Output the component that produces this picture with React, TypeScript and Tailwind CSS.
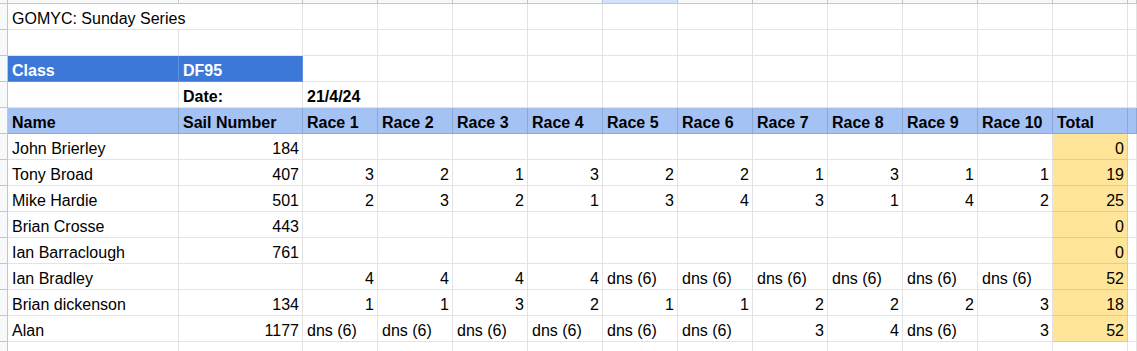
import type { ReactNode } from "react";

type Val = number | string;

interface Sailor {
    name: string;
    sail: Val;
    races: Val[];
    total: number;
}

const dns = "dns (6)";

const sailors: Sailor[] = [
    { name: "John Brierley", sail: 184, races: [], total: 0 },
    { name: "Tony Broad", sail: 407, races: [3, 2, 1, 3, 2, 2, 1, 3, 1, 1], total: 19 },
    { name: "Mike Hardie", sail: 501, races: [2, 3, 2, 1, 3, 4, 3, 1, 4, 2], total: 25 },
    { name: "Brian Crosse", sail: 443, races: [], total: 0 },
    { name: "Ian Barraclough", sail: 761, races: [], total: 0 },
    { name: "Ian Bradley", sail: "", races: [4, 4, 4, 4, dns, dns, dns, dns, dns, dns], total: 52 },
    { name: "Brian dickenson", sail: 134, races: [1, 1, 3, 2, 1, 1, 2, 2, 2, 3], total: 18 },
    { name: "Alan", sail: 1177, races: [dns, dns, dns, dns, dns, dns, 3, 4, dns, 3], total: 52 },
];

const races = Array.from({ length: 10 }, (_, i) => i);

function Cell({ children, right, className = "" }: { children?: ReactNode; right?: boolean; className?: string }) {
    return (
        <div
            className={`h-[26px] border-r border-b flex items-end pb-[1px] pl-[4px] pr-[3px] leading-[18px] whitespace-nowrap ${
                right ? "justify-end" : "justify-start"
            } ${className || "border-black/[0.11]"}`}
        >
            {children}
        </div>
    );
}

// row header on the far left
function RowHead() {
    return <div className="h-[26px] bg-[#f8f9fa] border-r border-b border-[#c4c7c5]" />;
}

function Blank({ n }: { n: number }) {
    return (
        <>
            {Array.from({ length: n }, (_, i) => (
                <Cell key={i} />
            ))}
        </>
    );
}

export default function App() {
    return (
        <div
            className="h-[351px] w-[1137px] overflow-hidden bg-white text-black text-[16px]"
            style={{ fontFamily: '"Liberation Sans", Arial, sans-serif' }}
        >
            <div className="grid grid-cols-[8px_171px_124px_repeat(11,75px)_1fr]">
                {/* column header strip */}
                <div className="h-[4px] bg-[#f8f9fa] border-r border-b border-[#c4c7c5]" />
                {Array.from({ length: 14 }, (_, i) => (
                    <div
                        key={i}
                        className={`h-[4px] border-r border-b border-[#c4c7c5] ${i === 6 ? "bg-[#d3e3fd]" : "bg-[#f8f9fa]"}`}
                    />
                ))}

                {/* title */}
                <RowHead />
                <div className="col-span-2 h-[26px] border-r border-b border-black/[0.11] flex items-end pb-[1px] pl-[4px] leading-[18px] whitespace-nowrap">
                    GOMYC: Sunday Series
                </div>
                <Blank n={12} />

                {/* blank */}
                <RowHead />
                <Blank n={14} />

                {/* class */}
                <RowHead />
                <Cell className="bg-[#3c78d8] text-white font-bold border-white/[0.18]">Class</Cell>
                <Cell className="bg-[#3c78d8] text-white font-bold border-white/[0.18]">DF95</Cell>
                <Blank n={12} />

                {/* date */}
                <RowHead />
                <Cell />
                <Cell className="font-bold border-black/[0.11]">Date:</Cell>
                <Cell className="font-bold border-black/[0.11]">21/4/24</Cell>
                <Blank n={11} />

                {/* header */}
                <RowHead />
                {["Name", "Sail Number", ...races.map((r) => `Race ${r + 1}`), "Total", ""].map((h, i) => (
                    <Cell key={i} className="bg-[#a4c2f4] font-bold border-black/[0.13]">
                        {h}
                    </Cell>
                ))}

                {sailors.map((s) => (
                    <div key={s.name} className="contents">
                        <RowHead />
                        <Cell>{s.name}</Cell>
                        <Cell right>{s.sail}</Cell>
                        {races.map((r) => {
                            const v = s.races[r];
                            return (
                                <Cell key={r} right={typeof v === "number"}>
                                    {v}
                                </Cell>
                            );
                        })}
                        <Cell right className="bg-[#ffe599] border-black/[0.1]">
                            {s.total}
                        </Cell>
                        <Cell />
                    </div>
                ))}

                {/* partial row at the bottom */}
                <RowHead />
                <Blank n={14} />
            </div>
        </div>
    );
}
